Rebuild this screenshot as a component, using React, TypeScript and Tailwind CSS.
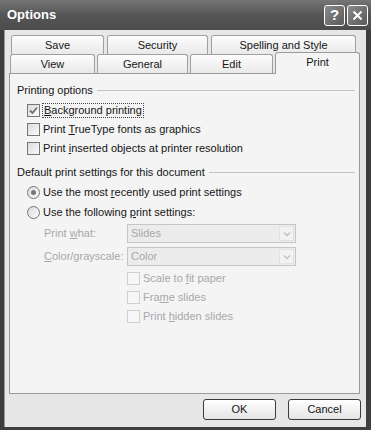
import React from "react";

const font = "font-['Liberation_Sans',Arial,sans-serif]";

function CheckBox({ checked, disabled }: { checked?: boolean; disabled?: boolean }) {
  return (
    <span
      className={`w-[13px] h-[13px] shrink-0 border flex items-center justify-center ${
        disabled ? "border-[#cfcfcf] bg-[#f6f6f6]" : "border-[#767676] bg-gradient-to-br from-[#dcdcdc] to-[#fafafa]"
      }`}
    >
      {checked && (
        <svg width="9" height="9" viewBox="0 0 9 9">
          <path d="M1 4.5 L3.5 7 L8 1.5" stroke="#6f6f6f" strokeWidth="1.8" fill="none" />
        </svg>
      )}
    </span>
  );
}

function Radio({ checked }: { checked?: boolean }) {
  return (
    <span className="w-[13px] h-[13px] shrink-0 rounded-full border border-[#767676] bg-gradient-to-br from-[#dcdcdc] to-[#fafafa] flex items-center justify-center">
      {checked && <span className="w-[5px] h-[5px] rounded-full bg-[#777]" />}
    </span>
  );
}

function Select({ value }: { value: string }) {
  return (
    <div className="w-[169px] h-[19px] border border-[#c6c6c6] bg-[#ececec] flex items-center justify-between">
      <span className="pl-[3px] text-[#a8a8a8]">{value}</span>
      <span className="w-[15px] h-[15px] mr-px border border-[#e2e2e2] bg-[#f2f2f2] flex items-center justify-center">
        <svg width="8" height="6" viewBox="0 0 8 6">
          <path d="M1 1.5 L4 4.5 L7 1.5" stroke="#c0c0c0" strokeWidth="1.4" fill="none" />
        </svg>
      </span>
    </div>
  );
}

function Tab({ label, w, active }: { label: string; w: string; active?: boolean }) {
  return (
    <div
      className={`${w} flex items-center justify-center border border-b-0 rounded-t-[3px] ${
        active
          ? "h-[22px] -mt-[2px] border-[#9a9a9a] bg-[#f4f4f4] relative z-10 -mb-px pb-[2px]"
          : "h-[19px] border-[#a0a0a0] bg-gradient-to-b from-[#fdfdfd] to-[#e9e9e9]"
      }`}
    >
      {label}
    </div>
  );
}

function GroupLabel({ text }: { text: string }) {
  return (
    <div className="h-[18px] flex items-center pl-[7px] pr-[4px]">
      <span className="mr-[4px] whitespace-nowrap">{text}</span>
      <span className="flex-1 h-px bg-[#c2c2c2]" />
    </div>
  );
}

export default function App() {
  return (
    <div className={`w-[371px] h-[430px] flex flex-col bg-[#3e3e3e] text-[11px] text-[#151515] ${font}`}>
      {/* Title bar */}
      <div className="h-[30px] shrink-0 flex items-center justify-between pl-[7px] pr-[3px] bg-gradient-to-b from-[#767676] via-[#555] to-[#4c4c4c]">
        <span className="text-white font-bold text-[13px]">Options</span>
        <div className="flex gap-[2px]">
          <div className="w-[21px] h-[21px] rounded-[3px] border border-white bg-gradient-to-br from-[#8a8a8a] to-[#5a5a5a] flex items-center justify-center text-white font-bold text-[15px]">
            ?
          </div>
          <div className="w-[21px] h-[21px] rounded-[3px] border border-white bg-gradient-to-br from-[#8a8a8a] to-[#5a5a5a] flex items-center justify-center">
            <svg width="11" height="11" viewBox="0 0 11 11">
              <path d="M1.5 1.5 L9.5 9.5 M9.5 1.5 L1.5 9.5" stroke="white" strokeWidth="2" />
            </svg>
          </div>
        </div>
      </div>

      {/* Body */}
      <div className="flex-1 ml-[4px] mr-[5px] mb-[3px] bg-[#e7e7e7] border-l border-[#9a9a9a] flex flex-col pt-[5px]">
        {/* Tabs */}
        <div className="flex gap-[3px] pl-[6px]">
          <Tab label="Save" w="w-[93px]" />
          <Tab label="Security" w="w-[101px]" />
          <Tab label="Spelling and Style" w="w-[145px]" />
        </div>
        <div className="flex gap-[2px] pl-[5px] items-end">
          <Tab label="View" w="w-[85px]" />
          <Tab label="General" w="w-[91px]" />
          <Tab label="Edit" w="w-[83px]" />
          <Tab label="Print" w="w-[85px]" active />
        </div>

        {/* Panel */}
        <div className="ml-[4px] w-[351px] h-[321px] border border-[#9a9a9a] bg-[#f4f4f4] pt-[7px]">
          <GroupLabel text="Printing options" />
          <div className="mt-[2px] flex flex-col pl-[17px]">
            <div className="h-[19px] flex items-center gap-[2px]">
              <CheckBox checked />
              <span className="border border-dotted border-[#444] px-px leading-[13px]">
                <u>B</u>ackground printing
              </span>
            </div>
            <div className="h-[19px] flex items-center gap-[3px]">
              <CheckBox />
              <span>
                Print <u>T</u>rueType fonts as graphics
              </span>
            </div>
            <div className="h-[19px] flex items-center gap-[3px]">
              <CheckBox />
              <span>
                Print <u>i</u>nserted objects at printer resolution
              </span>
            </div>
          </div>

          <div className="mt-[5px]">
            <GroupLabel text="Default print settings for this document" />
          </div>
          <div className="mt-px flex flex-col pl-[17px]">
            <div className="h-[20px] flex items-center gap-[3px]">
              <Radio checked />
              <span>
                Use the most <u>r</u>ecently used print settings
              </span>
            </div>
            <div className="h-[20px] flex items-center gap-[3px]">
              <Radio />
              <span>
                Use the following <u>p</u>rint settings:
              </span>
            </div>
          </div>

          <div className="mt-[2px] flex flex-col gap-[4px] pl-[34px] text-[#a8a8a8]">
            <div className="flex items-center">
              <span className="w-[83px]">
                Print <u>w</u>hat:
              </span>
              <Select value="Slides" />
            </div>
            <div className="flex items-center">
              <span className="w-[83px]">
                <u>C</u>olor/grayscale:
              </span>
              <Select value="Color" />
            </div>
          </div>

          <div className="mt-[3px] flex flex-col pl-[117px] text-[#a8a8a8]">
            <div className="h-[19px] flex items-center gap-[3px]">
              <CheckBox disabled />
              <span>
                Scale to <u>f</u>it paper
              </span>
            </div>
            <div className="h-[19px] flex items-center gap-[3px]">
              <CheckBox disabled />
              <span>
                Fra<u>m</u>e slides
              </span>
            </div>
            <div className="h-[19px] flex items-center gap-[3px]">
              <CheckBox disabled />
              <span>
                Print <u>h</u>idden slides
              </span>
            </div>
          </div>
        </div>

        {/* Buttons */}
        <div className="mt-[5px] flex justify-end gap-[12px] pr-[5px]">
          <button className="w-[73px] h-[21px] rounded-[3px] border border-[#3a3a3a] bg-gradient-to-b from-white to-[#e4e4e4]">
            OK
          </button>
          <button className="w-[73px] h-[21px] rounded-[3px] border border-[#3a3a3a] bg-gradient-to-b from-white to-[#e4e4e4]">
            Cancel
          </button>
        </div>
      </div>
    </div>
  );
}
